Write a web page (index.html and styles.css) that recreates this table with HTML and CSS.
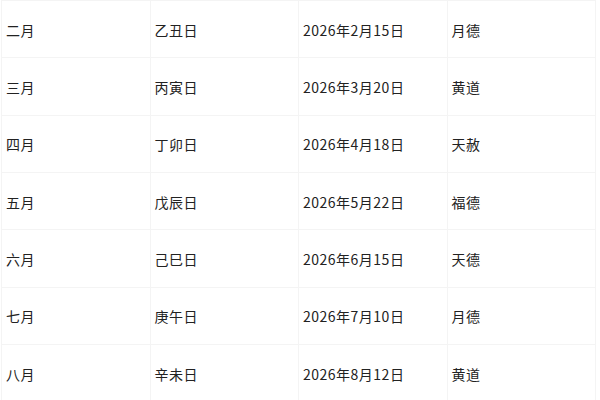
FILE: index.html
```html
<!DOCTYPE html>
<html lang="zh-CN">
<head>
<meta charset="utf-8">
<link rel="stylesheet" href="styles.css">
</head>
<body>
<table class="schedule">
  <tbody>
    <tr><td>二月</td><td>乙丑日</td><td>2026年2月15日</td><td>月德</td></tr>
    <tr><td>三月</td><td>丙寅日</td><td>2026年3月20日</td><td>黄道</td></tr>
    <tr><td>四月</td><td>丁卯日</td><td>2026年4月18日</td><td>天赦</td></tr>
    <tr><td>五月</td><td>戊辰日</td><td>2026年5月22日</td><td>福德</td></tr>
    <tr><td>六月</td><td>己巳日</td><td>2026年6月15日</td><td>天德</td></tr>
    <tr><td>七月</td><td>庚午日</td><td>2026年7月10日</td><td>月德</td></tr>
    <tr><td>八月</td><td>辛未日</td><td>2026年8月12日</td><td>黄道</td></tr>
  </tbody>
</table>
</body>
</html>
```
FILE: styles.css
```css
html, body {
  margin: 0;
  padding: 0;
  background: #ffffff;
  overflow: hidden;
  height: 400px;
}
.schedule {
  margin-left: 1px;
  width: 595px;
  border-collapse: collapse;
  table-layout: fixed;
  font-family: "Noto Sans CJK SC", "Noto Sans", sans-serif;
  font-size: 14px;
  letter-spacing: 0.5px;
  color: #222222;
}
.schedule tr {
  height: 57.33px;
}
.schedule td {
  border: 1px solid #f4f4f4;
  padding: 1px 0 0 4px;
  vertical-align: middle;
  white-space: nowrap;
}
```
